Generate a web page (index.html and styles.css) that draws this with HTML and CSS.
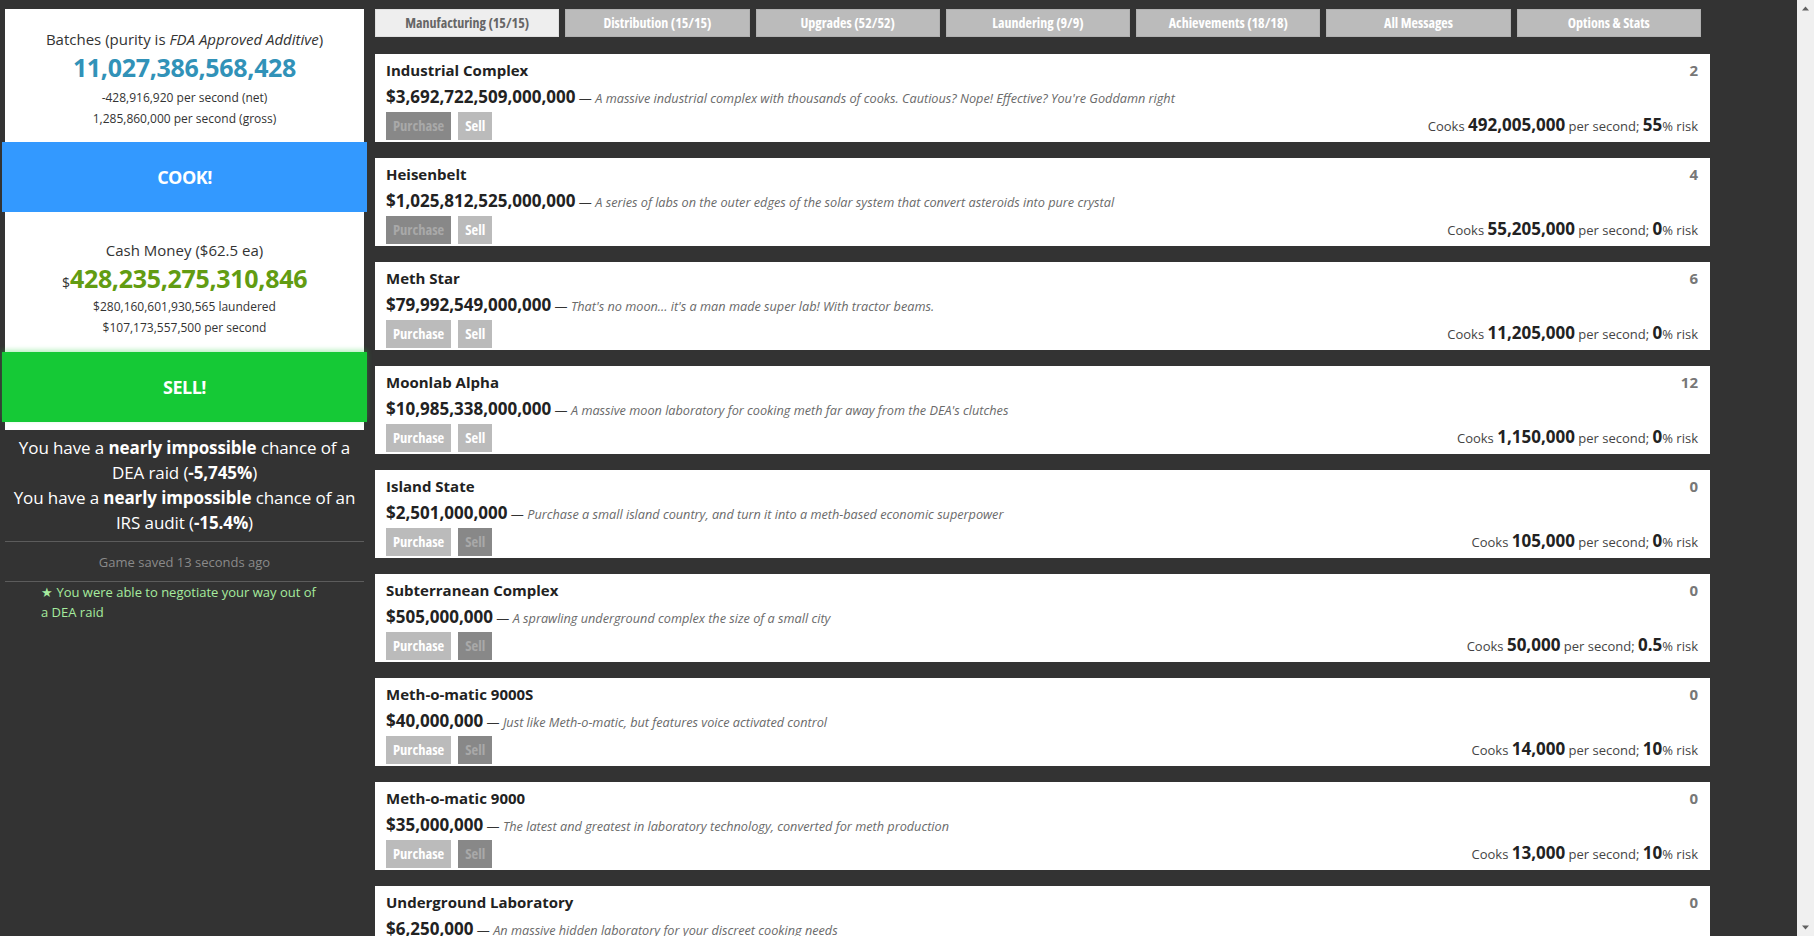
FILE: index.html
```html
<!DOCTYPE html>
<html lang="en">
<head>
<meta charset="utf-8">
<title>Breaking Bad: The Idle Game</title>
<link rel="stylesheet" href="styles.css">
</head>
<body>
<div class="page">
  <div class="viewport">
    <aside class="sidebar">
      <div class="panel">
        <div class="stat batches">
          <div class="label">Batches (purity is <em>FDA Approved Additive</em>)</div>
          <div class="big blue">11,027,386,568,428</div>
          <div class="sub first">-428,916,920 per second (net)</div>
          <div class="sub">1,285,860,000 per second (gross)</div>
        </div>
        <button class="action cook">COOK!</button>
        <div class="stat cash">
          <div class="label">Cash Money ($62.5 ea)</div>
          <div class="big green"><span class="dollar">$</span>428,235,275,310,846</div>
          <div class="sub">$280,160,601,930,565 laundered</div>
          <div class="sub">$107,173,557,500 per second</div>
        </div>
        <button class="action sell">SELL!</button>
      </div>
      <div class="risk">
        <p>You have a <b>nearly impossible</b> chance of a<br>DEA raid (<b>-5,745%</b>)</p>
        <p>You have a <b>nearly impossible</b> chance of an<br>IRS audit (<b>-15.4%</b>)</p>
      </div>
      <hr class="rule">
      <div class="saved">Game saved 13 seconds ago</div>
      <hr class="rule">
      <ul class="messages">
        <li>★ You were able to negotiate your way out of<br>a DEA raid</li>
      </ul>
    </aside>
    <main class="main">
      <nav class="tabs">
        <div class="tab active">Manufacturing (15/15)</div>
        <div class="tab">Distribution (15/15)</div>
        <div class="tab">Upgrades (52/52)</div>
        <div class="tab">Laundering (9/9)</div>
        <div class="tab">Achievements (18/18)</div>
        <div class="tab">All Messages</div>
        <div class="tab">Options &amp; Stats</div>
      </nav>
      <div class="items">
        <div class="card">
          <div class="info">
            <div class="title">Industrial Complex</div>
            <div class="price"><b>$3,692,722,509,000,000</b> — <i>A massive industrial complex with thousands of cooks. Cautious? Nope! Effective? You're Goddamn right</i></div>
            <div class="btns"><span class="btn off">Purchase</span><span class="btn">Sell</span></div>
          </div>
          <div class="meta">
            <div class="count">2</div>
            <div class="rate">Cooks <b>492,005,000</b> per second; <b>55</b>% risk</div>
          </div>
        </div>
        <div class="card">
          <div class="info">
            <div class="title">Heisenbelt</div>
            <div class="price"><b>$1,025,812,525,000,000</b> — <i>A series of labs on the outer edges of the solar system that convert asteroids into pure crystal</i></div>
            <div class="btns"><span class="btn off">Purchase</span><span class="btn">Sell</span></div>
          </div>
          <div class="meta">
            <div class="count">4</div>
            <div class="rate">Cooks <b>55,205,000</b> per second; <b>0</b>% risk</div>
          </div>
        </div>
        <div class="card">
          <div class="info">
            <div class="title">Meth Star</div>
            <div class="price"><b>$79,992,549,000,000</b> — <i>That's no moon... it's a man made super lab! With tractor beams.</i></div>
            <div class="btns"><span class="btn">Purchase</span><span class="btn">Sell</span></div>
          </div>
          <div class="meta">
            <div class="count">6</div>
            <div class="rate">Cooks <b>11,205,000</b> per second; <b>0</b>% risk</div>
          </div>
        </div>
        <div class="card">
          <div class="info">
            <div class="title">Moonlab Alpha</div>
            <div class="price"><b>$10,985,338,000,000</b> — <i>A massive moon laboratory for cooking meth far away from the DEA's clutches</i></div>
            <div class="btns"><span class="btn">Purchase</span><span class="btn">Sell</span></div>
          </div>
          <div class="meta">
            <div class="count">12</div>
            <div class="rate">Cooks <b>1,150,000</b> per second; <b>0</b>% risk</div>
          </div>
        </div>
        <div class="card">
          <div class="info">
            <div class="title">Island State</div>
            <div class="price"><b>$2,501,000,000</b> — <i>Purchase a small island country, and turn it into a meth-based economic superpower</i></div>
            <div class="btns"><span class="btn">Purchase</span><span class="btn off">Sell</span></div>
          </div>
          <div class="meta">
            <div class="count">0</div>
            <div class="rate">Cooks <b>105,000</b> per second; <b>0</b>% risk</div>
          </div>
        </div>
        <div class="card">
          <div class="info">
            <div class="title">Subterranean Complex</div>
            <div class="price"><b>$505,000,000</b> — <i>A sprawling underground complex the size of a small city</i></div>
            <div class="btns"><span class="btn">Purchase</span><span class="btn off">Sell</span></div>
          </div>
          <div class="meta">
            <div class="count">0</div>
            <div class="rate">Cooks <b>50,000</b> per second; <b>0.5</b>% risk</div>
          </div>
        </div>
        <div class="card">
          <div class="info">
            <div class="title">Meth-o-matic 9000S</div>
            <div class="price"><b>$40,000,000</b> — <i>Just like Meth-o-matic, but features voice activated control</i></div>
            <div class="btns"><span class="btn">Purchase</span><span class="btn off">Sell</span></div>
          </div>
          <div class="meta">
            <div class="count">0</div>
            <div class="rate">Cooks <b>14,000</b> per second; <b>10</b>% risk</div>
          </div>
        </div>
        <div class="card">
          <div class="info">
            <div class="title">Meth-o-matic 9000</div>
            <div class="price"><b>$35,000,000</b> — <i>The latest and greatest in laboratory technology, converted for meth production</i></div>
            <div class="btns"><span class="btn">Purchase</span><span class="btn off">Sell</span></div>
          </div>
          <div class="meta">
            <div class="count">0</div>
            <div class="rate">Cooks <b>13,000</b> per second; <b>10</b>% risk</div>
          </div>
        </div>
        <div class="card">
          <div class="info">
            <div class="title">Underground Laboratory</div>
            <div class="price"><b>$6,250,000</b> — <i>An massive hidden laboratory for your discreet cooking needs</i></div>
            <div class="btns"><span class="btn">Purchase</span><span class="btn off">Sell</span></div>
          </div>
          <div class="meta">
            <div class="count">0</div>
            <div class="rate">Cooks <b>2,250</b> per second; <b>15</b>% risk</div>
          </div>
        </div>
      </div>
    </main>
  </div>
  <div class="scrollbar">
    <svg class="arrow" width="17" height="17" viewBox="0 0 17 17"><path d="M5 10.5 L8.5 6.5 L12 10.5 Z" fill="#606060"/></svg>
    <svg class="arrow" width="17" height="17" viewBox="0 0 17 17"><path d="M5 6.5 L8.5 10.5 L12 6.5 Z" fill="#606060"/></svg>
  </div>
</div>
</body>
</html>
```

FILE: styles.css
```css
html, body {
  margin: 0;
  padding: 0;
  overflow: hidden;
}
body {
  background: #333;
  font-family: "Open Sans", "Noto Sans", sans-serif;
  color: #333;
}
.page {
  display: flex;
  height: 936px;
}
.viewport {
  flex: 1;
  display: flex;
  align-items: flex-start;
  min-width: 0;
  overflow: hidden;
}
.sidebar {
  flex: none;
  width: 359px;
  margin-left: 5px;
}
.main {
  flex: none;
  width: 1335px;
  margin-left: 11px;
}
.scrollbar {
  flex: none;
  width: 17px;
  height: 936px;
  background: #f0f0f0;
  display: flex;
  flex-direction: column;
  justify-content: space-between;
}
.arrow { display: block; }

/* left panel */
.panel {
  margin-top: 9px;
  background: #fff;
  padding-bottom: 8px;
  text-align: center;
}
.stat.batches { padding: 20px 0 13px; }
.stat.cash { padding: 28px 0 14px; }
.label {
  font-size: 15px;
  line-height: 20px;
  color: #333;
}
.big {
  font-size: 25px;
  font-weight: 700;
  line-height: 36px;
  letter-spacing: -0.3px;
}
.big.blue { color: #3192b8; }
.big.green { color: #629c12; }
.dollar {
  font-size: 14px;
  font-weight: 400;
  line-height: 0;
  color: #333;
  letter-spacing: 0;
}
.sub {
  font-size: 12px;
  line-height: 21px;
  color: #333;
}
.sub.first { margin-top: 2px; }
.action {
  display: block;
  width: calc(100% + 6px);
  margin: 0 -3px;
  height: 70px;
  border: 0;
  padding: 0;
  color: #fff;
  font-family: "Open Sans", sans-serif;
  font-weight: 700;
  font-size: 18px;
  letter-spacing: -0.5px;
}
.action.cook { background: #3399ff; }
.action.sell {
  background: #15c936;
  box-shadow: 0 -2px 5px rgba(40, 210, 70, 0.35);
}

.risk {
  margin-top: 5px;
  color: #fff;
  font-size: 17px;
  line-height: 25px;
  text-align: center;
  letter-spacing: -0.1px;
  white-space: nowrap;
}
.risk p { margin: 0; }
.rule {
  border: 0;
  border-top: 1px solid #5c5c5c;
  margin: 6px 0 0;
  height: 0;
}
.saved {
  margin: 10px 0 9px;
  font-size: 13px;
  line-height: 20px;
  color: #8a8a8a;
  text-align: center;
}
.messages {
  list-style: none;
  margin: 0;
  padding: 0 20px 0 36px;
  color: #a6eb9e;
  font-size: 13px;
  line-height: 20px;
  white-space: nowrap;
}

/* tabs */
.tabs {
  display: flex;
  gap: 6px;
  margin-top: 9px;
  width: 1326px;
  height: 28px;
}
.tab {
  flex: 1;
  box-sizing: border-box;
  background: #bbb;
  border: 1px solid #b0b0b0;
  color: #fff;
  font-weight: 700;
  font-size: 14px;
  font-stretch: 87.5%;
  line-height: 26px;
  text-align: center;
}
.tab.active {
  background: #eee;
  border-color: #e0e0e0;
  color: #666;
}

/* item cards */
.items {
  margin-top: 17px;
  display: flex;
  flex-direction: column;
  gap: 16px;
}
.card {
  flex: none;
  height: 88px;
  box-sizing: border-box;
  padding: 6px 12px 3px 11px;
  background: #fff;
  display: flex;
  justify-content: space-between;
}
.info {
  flex: 1;
  min-width: 0;
}
.title {
  font-size: 15px;
  font-weight: 700;
  line-height: 20px;
  color: #222;
}
.price {
  margin-top: 6px;
  font-size: 13px;
  line-height: 22px;
  color: #333;
  white-space: nowrap;
}
.price b {
  font-size: 17px;
  color: #222;
}
.price i {
  font-size: 12.7px;
  font-weight: 400;
  color: #6a6a6a;
}
.btns {
  margin-top: 3px;
  display: flex;
  gap: 7px;
}
.btn {
  height: 28px;
  padding: 0 7px;
  background: #bbb;
  color: #fff;
  font-weight: 700;
  font-size: 14.5px;
  font-stretch: 87.5%;
  line-height: 28px;
}
.btn.off {
  background: #888;
  color: #a9a9a9;
}
.meta {
  flex: none;
  display: flex;
  flex-direction: column;
  justify-content: space-between;
  align-items: flex-end;
  padding-bottom: 2px;
}
.count {
  font-size: 15px;
  font-weight: 700;
  line-height: 20px;
  color: #777;
}
.rate {
  font-size: 13px;
  line-height: 22px;
  color: #444;
  white-space: nowrap;
}
.rate b {
  font-size: 17px;
  color: #222;
}
```
